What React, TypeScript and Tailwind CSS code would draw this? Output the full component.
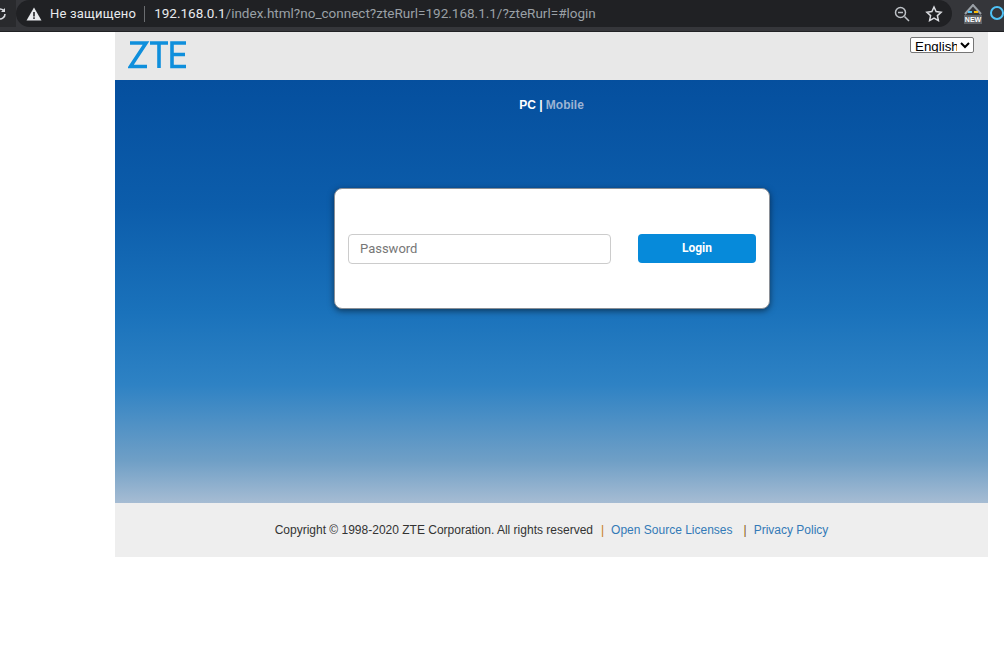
import React from "react";

function ZteLogo() {
  return (
    <svg width="60" height="30" viewBox="0 0 60 30" fill="none" stroke="#0f8fdc" strokeWidth="3.6" strokeLinejoin="miter">
      <path d="M2 3H18L2.5 26.5H19" />
      <path d="M22 3H40M31 3V28" />
      <path d="M58 3H44V26.5H58M44 14.5H57" />
    </svg>
  );
}

export default function App() {
  return (
    <div className="w-[1004px] h-[662px] overflow-hidden bg-white font-['Liberation_Sans',sans-serif]">
      <div className="h-8 bg-[#35363a] border-b border-[#202124] flex items-start">
        <div className="w-[19px] h-[27px] bg-[#292a2d] flex items-center overflow-hidden">
          <svg width="14" height="14" viewBox="0 0 14 14" className="ml-[-7px] shrink-0" fill="none" stroke="#dadce0" strokeWidth="1.6">
            <path d="M12 7a5 5 0 1 1-1.5-3.6" />
            <path d="M12 1v4H8" fill="#dadce0" stroke="none" />
          </svg>
        </div>
        <div className="w-[936px] h-[27px] bg-[#202124] rounded-r-[14px] rounded-l-[14px] flex items-center pl-[10px] text-[13px] font-['Roboto',sans-serif] shrink-0">
          <svg width="16" height="14" viewBox="0 0 16 14" className="shrink-0">
            <path d="M8 0.5L15.5 13.5H0.5Z" fill="#e8eaed" />
            <rect x="7.2" y="5" width="1.6" height="4.5" fill="#202124" />
            <rect x="7.2" y="10.3" width="1.6" height="1.6" fill="#202124" />
          </svg>
          <span className="ml-2 text-[#e8eaed] tracking-[0.2px]">Не защищено</span>
          <span className="ml-2 w-px h-4 bg-[#6b6d70]" />
          <span className="ml-[9px] text-[13.5px] whitespace-nowrap">
            <span className="text-[#e8eaed]">192.168.0.1</span>
            <span className="text-[#9aa0a6]">/index.html?no_connect?zteRurl=192.168.1.1/?zteRurl=#login</span>
          </span>
          <div className="ml-auto flex items-center gap-[14px] pr-[9px]">
            <svg width="18" height="18" viewBox="0 0 18 18" fill="none" stroke="#bdc1c6" strokeWidth="1.5">
              <circle cx="7.5" cy="7.5" r="5" />
              <path d="M11.5 11.5L16 16M5 7.5h5" />
            </svg>
            <svg width="18" height="18" viewBox="0 0 18 18" fill="none" stroke="#dadce0" strokeWidth="1.5">
              <path d="M9 2l2.1 4.6 5 .6-3.7 3.4 1 5L9 13.1l-4.4 2.5 1-5L1.9 7.2l5-.6z" />
            </svg>
          </div>
        </div>
        <div className="ml-[12px] mt-[4px] w-[18px] h-[20px] relative shrink-0">
          <svg width="18" height="12" viewBox="0 0 18 12" className="absolute top-0 left-0" fill="none">
            <path d="M1 10L9 1l8 9" stroke="#9aa0a6" strokeWidth="2" />
            <rect x="4" y="7" width="4" height="2" fill="#4fc3f7" />
            <rect x="10" y="7" width="4" height="2" fill="#fbbc04" />
          </svg>
          <span className="absolute left-0 bottom-0 w-[18px] text-center font-['Liberation_Sans',sans-serif] font-bold text-[7px] leading-[9px] text-white bg-[#5f6368]">NEW</span>
        </div>
        <div className="ml-[8px] mt-[6px] w-[14px] h-[14px] rounded-full border-2 border-[#4fc3f7] shrink-0" />
      </div>

      <div className="ml-[115px] w-[873px]">
        <div className="h-12 bg-[#e8e8e8] flex items-start justify-between">
          <div className="ml-[13px] mt-[8px]"><ZteLogo /></div>
          <select className="mt-[5px] mr-[14px] w-[64px] h-[16px] bg-white border border-[#767676] rounded-[2px] text-[13.33px] leading-[14px] text-black appearance-auto">
            <option>English</option>
          </select>
        </div>
        <div className="h-[423px] bg-[linear-gradient(to_bottom,#054f9e_0%,#0c5dab_30%,#1a72bb_55%,#2e82c4_72%,#6f9fc6_90%,#a6bcd3_100%)] flex flex-col items-center">
          <div className="mt-[17px] text-xs font-bold leading-[17px] text-white">
            PC | <span className="text-[#9db4d3]">Mobile</span>
          </div>
          <div className="mt-[74px] ml-[1px] w-[436px] h-[121px] bg-white rounded-[8px] border border-[#8a8f96] shadow-[0_2px_6px_rgba(0,0,0,0.5)] flex items-center pl-[13px] pr-[13px]">
            <input
              placeholder="Password"
              className="w-[263px] h-[30px] border border-[#ccc] rounded-[4px] px-[11px] text-[13px] text-[#555] placeholder:text-[#777] bg-white outline-none font-['Roboto',sans-serif]"
            />
            <button className="ml-auto w-[118px] h-[29px] mb-[1px] rounded-[4px] bg-[#068ada] text-white text-xs font-bold font-['Roboto',sans-serif]">
              Login
            </button>
          </div>
        </div>
        <div className="h-[54px] bg-[#eeeeee] flex items-center justify-center text-xs text-[#333] whitespace-nowrap">
          <span>Copyright © 1998-2020 ZTE Corporation. All rights reserved</span>
          <span className="ml-[8px] text-[#c77f1a]">|</span>
          <a className="ml-[7px] text-[#337ab7]">Open Source Licenses</a>
          <span className="ml-[11px] text-[#8a5a1a]">|</span>
          <a className="ml-[7px] text-[#337ab7]">Privacy Policy</a>
        </div>
      </div>
    </div>
  );
}
